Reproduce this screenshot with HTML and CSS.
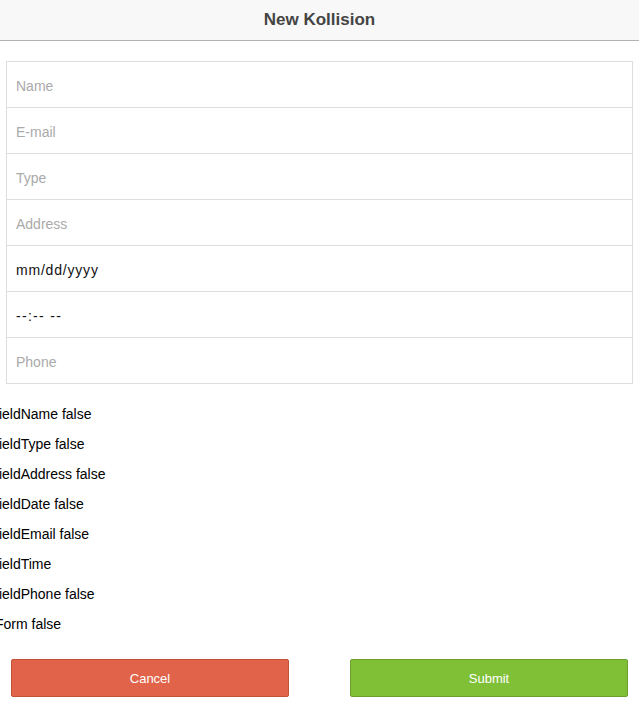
FILE: index.html
```html
<!DOCTYPE html>
<html lang="en">
<head>
    <meta charset="UTF-8">
    <meta name="viewport" content="width=device-width, initial-scale=1.0">
    <title>New Kollision</title>
    <link rel="stylesheet" href="styles.css">
</head>
<body>
    <div class="bar-header">
        <h1 class="title">New Kollision</h1>
    </div>

    <form class="list" id="kollisionForm">
        <label class="item"><input type="text" name="name" placeholder="Name"></label>
        <label class="item"><input type="email" name="email" placeholder="E-mail"></label>
        <label class="item"><input type="text" name="type" placeholder="Type"></label>
        <label class="item"><input type="text" name="address" placeholder="Address"></label>
        <label class="item"><input type="text" name="date" class="mask mask-date" placeholder="mm/dd/yyyy"></label>
        <label class="item"><input type="text" name="time" class="mask mask-time" placeholder="--:-- --"></label>
        <label class="item"><input type="tel" name="phone" placeholder="Phone"></label>
    </form>

    <div class="debug">
        <p>fieldName false</p>
        <p>fieldType false</p>
        <p>fieldAddress false</p>
        <p>fieldDate false</p>
        <p>fieldEmail false</p>
        <p>fieldTime</p>
        <p>fieldPhone false</p>
        <p>Form false</p>
    </div>

    <div class="actions">
        <button type="button" class="button button-assertive">Cancel</button>
        <button type="submit" class="button button-balanced" form="kollisionForm">Submit</button>
    </div>
</body>
</html>
```

FILE: styles.css
```css
body {
    margin: 0;
    font-family: 'Liberation Sans', Arial, sans-serif;
    font-size: 14px;
    color: #000;
    background: #fff;
}

.bar-header {
    height: 40px;
    background: #f8f8f8;
    border-bottom: 1px solid #b2b2b2;
    display: flex;
    align-items: center;
    justify-content: center;
}

.title {
    margin: 0;
    font-size: 17px;
    font-weight: bold;
    color: #444;
}

.list {
    margin: 20px 6px 0;
    border: 1px solid #ddd;
    border-top: none;
}

.item {
    display: block;
    border-top: 1px solid #ddd;
    height: 45px;
}

.item input {
    box-sizing: border-box;
    width: 100%;
    height: 45px;
    border: none;
    outline: none;
    padding: 2px 9px 0;
    font-family: 'Liberation Sans', Arial, sans-serif;
    font-size: 14px;
    color: #222;
    background: transparent;
}

.item input::placeholder {
    color: #aaa;
}

.item input.mask::placeholder {
    color: #111;
}

.mask-date {
    letter-spacing: 0.8px;
}

.mask-time {
    letter-spacing: 1.3px;
}

.debug {
    padding-top: 20px;
    margin-left: -5px;
}

.debug p {
    margin: 0 0 10px;
    line-height: 20px;
}

.actions {
    display: flex;
    justify-content: space-between;
    padding: 15px 11px 0;
}

.button {
    width: 278px;
    height: 38px;
    border-radius: 2px;
    font-family: 'Liberation Sans', Arial, sans-serif;
    font-size: 13px;
    color: #fff;
    cursor: pointer;
}

.button-assertive {
    background: #e0634a;
    border: 1px solid #c24f3a;
}

.button-balanced {
    background: #80c037;
    border: 1px solid #6b9f2e;
}
```
